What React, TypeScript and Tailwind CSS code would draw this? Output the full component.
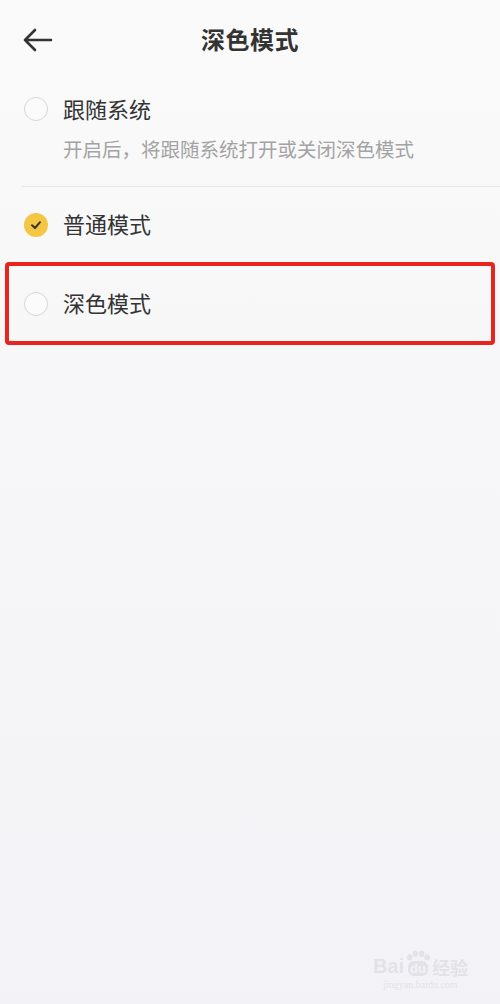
import React from "react";

const font = { fontFamily: '"Noto Sans CJK SC", "Noto Sans", sans-serif' };

function Radio({ checked }: { checked?: boolean }) {
  if (checked) {
    return (
      <span className="flex h-[24px] w-[24px] items-center justify-center rounded-full bg-[#f5c643]">
        <svg width="14" height="14" viewBox="0 0 14 14" fill="none">
          <path d="M3 7.2 L6 10 L11 4.2" stroke="#3a3428" strokeWidth="2" strokeLinecap="round" strokeLinejoin="round" />
        </svg>
      </span>
    );
  }
  return <span className="block h-[24px] w-[24px] rounded-full border-[1.5px] border-[#d6d6d6] bg-[#fbfbfb]" />;
}

export default function App() {
  return (
    <div
      className="relative flex h-[1004px] w-[500px] flex-col overflow-hidden bg-gradient-to-b from-[#fafafa] via-[#f6f6f8] to-[#f3f3f7] text-[#333]"
      style={font}
    >
      {/* header */}
      <div className="grid h-[80px] grid-cols-[80px_1fr_80px] items-center">
        <div className="pl-[23px]">
          <svg width="30" height="24" viewBox="0 0 30 24" fill="none">
            <path d="M2 12 H28 M12 2 L2 12 L12 22" stroke="#333" strokeWidth="2.6" strokeLinecap="round" strokeLinejoin="round" />
          </svg>
        </div>
        <h1 className="-translate-y-[1px] text-center text-[24px] font-bold leading-none tracking-[0.5px]">深色模式</h1>
        <div />
      </div>

      {/* follow system */}
      <div className="flex h-[58px] items-center gap-[15px] pl-[24px]">
        <Radio />
        <span className="-translate-y-[1px] text-[22px] leading-none">跟随系统</span>
      </div>
      <p className="-translate-y-[1px] pl-[63px] text-[19.5px] leading-[24px] text-[#a3a3a3]">开启后，将跟随系统打开或关闭深色模式</p>
      <div className="ml-[22px] mt-[24px] h-px bg-[#e6e6e8]" />

      {/* normal */}
      <div className="flex h-[75px] items-center gap-[15px] pl-[24px]">
        <Radio checked />
        <span className="-translate-y-[2px] text-[22px] leading-none">普通模式</span>
      </div>

      {/* dark, highlighted */}
      <div className="mx-[5px] flex h-[83px] items-center gap-[15px] rounded-[4px] border-[4px] border-[#e8241c] pl-[15px]">
        <Radio />
        <span className="-translate-y-[2px] text-[22px] leading-none">深色模式</span>
      </div>

      {/* watermark */}
      <div className="absolute bottom-[14px] right-[32px] flex flex-col items-center text-[#e2e2e8]">
        <div className="flex items-end gap-[2px]">
          <span className="text-[20px] font-bold leading-none" style={{ fontFamily: '"Liberation Sans", sans-serif' }}>Bai</span>
          <span className="relative flex flex-col items-center">
            <svg width="24" height="11" viewBox="0 0 26 12" fill="#e2e2e8">
              <ellipse cx="4" cy="8" rx="3" ry="3.5" />
              <ellipse cx="10" cy="4" rx="3" ry="3.5" />
              <ellipse cx="17" cy="4" rx="3" ry="3.5" />
              <ellipse cx="23" cy="8" rx="3" ry="3.5" />
            </svg>
            <span className="rounded-[6px] bg-[#e2e2e8] px-[2px] text-[13px] font-bold leading-[15px] text-[#f3f3f7]" style={{ fontFamily: '"Liberation Sans", sans-serif' }}>du</span>
          </span>
          <span className="text-[18px] font-bold leading-none">经验</span>
        </div>
        <span className="mt-[4px] text-[10px] leading-none" style={{ fontFamily: '"Liberation Serif", serif' }}>jingyan.baidu.com</span>
      </div>
    </div>
  );
}
